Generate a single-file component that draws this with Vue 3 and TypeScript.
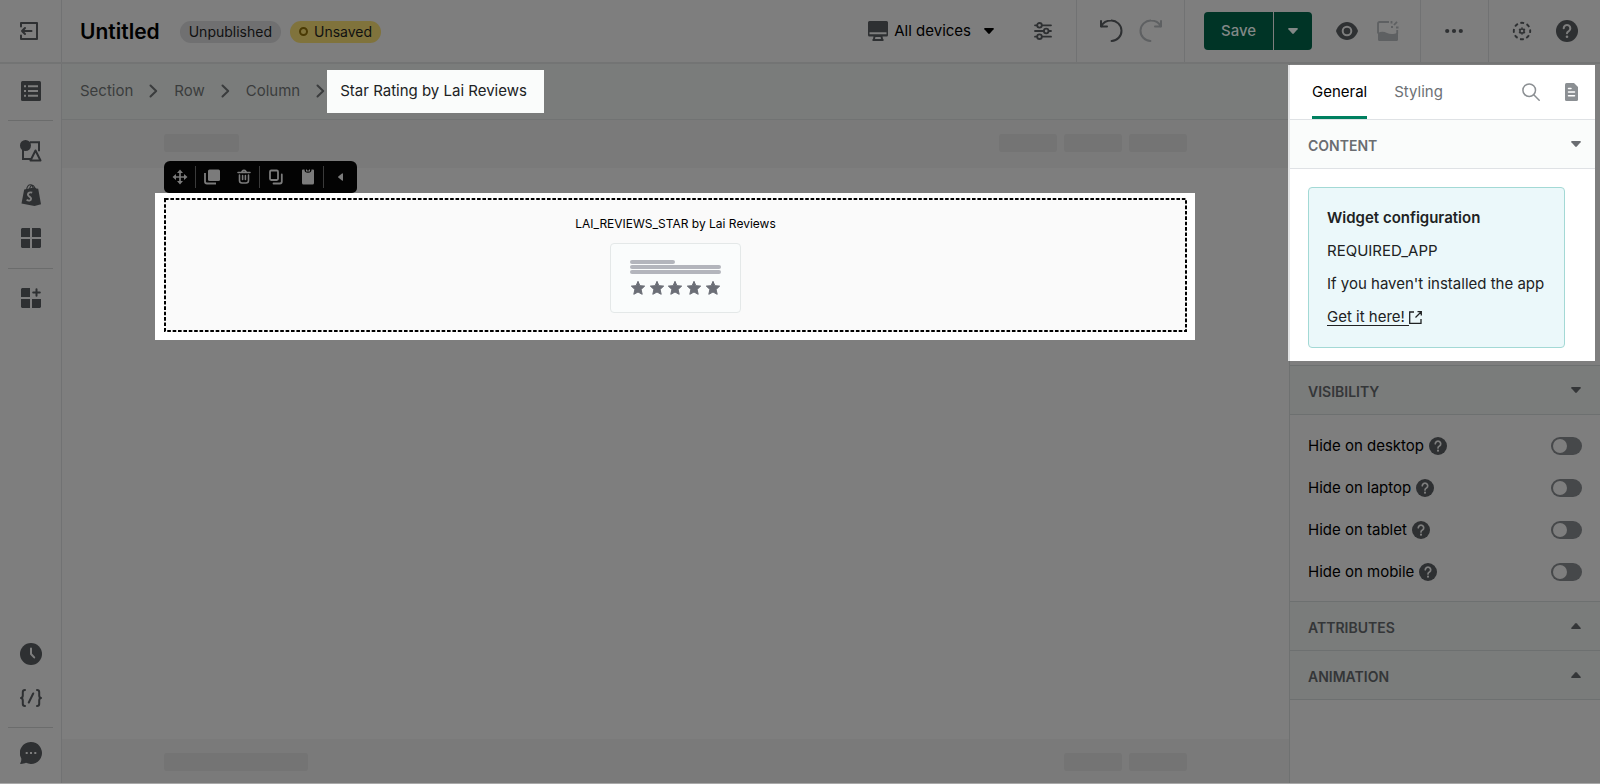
<script setup lang="ts">
import { ref } from 'vue'

interface VisibilityOption {
  id: string
  label: string
  hidden: boolean
}

const crumbs = ['Section', 'Row', 'Column']
const tabs = ['General', 'Styling']
const activeTab = ref('General')

const visibility = ref<VisibilityOption[]>([
  { id: 'hide-desktop', label: 'Hide on desktop', hidden: false },
  { id: 'hide-laptop', label: 'Hide on laptop', hidden: false },
  { id: 'hide-tablet', label: 'Hide on tablet', hidden: false },
  { id: 'hide-mobile', label: 'Hide on mobile', hidden: false },
])

const stars = [28, 47, 65, 84, 103]
</script>

<template>
  <div class="editor">
    <header class="topbar">
      <button class="icon-btn exit" aria-label="Exit">
        <svg width="20" height="20" viewBox="0 0 20 20" fill="none" stroke="currentColor" stroke-width="2" stroke-linecap="round" stroke-linejoin="round">
          <path d="M2 5.500V2h16v16H2v-3.500" />
          <path d="M12.500 10H3M6 7l-3 3 3 3" />
        </svg>
      </button>
      <div class="title-group">
        <h1>Untitled</h1>
        <span class="badge">Unpublished</span>
        <span class="badge warn"><i class="ring"></i>Unsaved</span>
      </div>
      <div class="devices">
        <button class="device-btn">
          <svg width="20" height="20" viewBox="0 0 20 20" fill="currentColor">
            <path d="M1.500 0h17A1.500 1.500 0 0 1 20 1.500V14a1.500 1.500 0 0 1-1.500 1.500h-4l.5 2.500h.5v2h-11v-2H5l.5-2.500h-4A1.500 1.500 0 0 1 0 14V1.500A1.500 1.500 0 0 1 1.500 0z" />
            <path class="knock" d="M1.500 11.200h17v2h-17zM7.400 16h5.200l.4 2h-6z" />
          </svg>
          <span>All devices</span>
          <svg class="caret" width="10" height="6" viewBox="0 0 10 6"><path d="M.8 0h8.400q1 .2.400 1.200L5.800 5.500q-.8.800-1.600 0L.4 1.200Q-.2.200.8 0z" fill="#000" /></svg>
        </button>
        <button class="icon-btn" aria-label="Settings">
          <svg width="18" height="18" viewBox="0 0 18 18" fill="none" stroke="currentColor" stroke-width="1.800" stroke-linecap="round">
            <path d="M1 3.300h1.800M8.200 3.300H17M1 9h8.500M15 9h2M1 14.700h1.800M8.200 14.700H17" />
            <circle cx="5.500" cy="3.300" r="2.300" /><circle cx="12.200" cy="9" r="2.300" /><circle cx="5.500" cy="14.700" r="2.300" />
          </svg>
        </button>
      </div>
      <div class="group history">
        <button class="icon-btn" aria-label="Undo">
          <svg width="24" height="24" viewBox="0 0 24 24" fill="none" stroke="currentColor" stroke-width="2" stroke-linecap="round" stroke-linejoin="round">
            <path d="M2 2v5.500h6" /><path d="M2.400 7.200C4 4 8 1.600 12 1.600a10.200 10.200 0 0 1 .6 20.400" />
          </svg>
        </button>
        <button class="icon-btn faded" aria-label="Redo">
          <svg width="24" height="24" viewBox="0 0 24 24" fill="none" stroke="currentColor" stroke-width="2" stroke-linecap="round" stroke-linejoin="round">
            <path d="M22 2v5.500h-6" /><path d="M21.600 7.200C20 4 16 1.600 12 1.600a10.200 10.200 0 0 0-.6 20.400" />
          </svg>
        </button>
      </div>
      <div class="group publish">
        <div class="save">
          <button class="save-main">Save</button>
          <button class="save-more" aria-label="More save options">
            <svg width="10" height="6" viewBox="0 0 10 6" fill="currentColor"><path d="M.8 0h8.400q1 .2.400 1.200L5.800 5.500q-.8.800-1.600 0L.4 1.200Q-.2.200.8 0z" /></svg>
          </button>
        </div>
        <button class="icon-btn" aria-label="Preview">
          <svg width="22" height="22" viewBox="0 0 22 22" fill="none">
            <path d="M0 11c1.500-5 5.800-9 11-9s9.500 4 11 9c-1.500 5-5.800 9-11 9S1.500 16 0 11z" fill="currentColor" />
            <circle cx="11" cy="11" r="4.300" stroke="#7e7e7e" stroke-width="2" />
          </svg>
        </button>
        <button class="icon-btn faded" aria-label="Generate image">
          <svg width="22" height="22" viewBox="0 0 22 22" fill="none" stroke="currentColor" stroke-width="1.800">
            <path d="M12 2H2.500A1.500 1.500 0 0 0 1 3.500v10M20.200 10v4" />
            <path d="M1 13c3-2 6-1.600 9 0s7 1.400 11-.5v7a1.500 1.500 0 0 1-1.500 1.500h-17A1.500 1.500 0 0 1 1 19.500z" fill="currentColor" stroke="none" />
            <path d="M14.500 1v2.500M21.500 7.500H19M17 5l3-3.200M14 7h2" />
          </svg>
        </button>
      </div>
      <div class="group more">
        <button class="icon-btn" aria-label="More actions">
          <svg width="18" height="6" viewBox="0 0 18 6" fill="currentColor"><circle cx="2.200" cy="3" r="2.100" /><circle cx="9" cy="3" r="2.100" /><circle cx="15.800" cy="3" r="2.100" /></svg>
        </button>
      </div>
      <div class="group support">
        <button class="icon-btn" aria-label="Preferences">
          <svg width="20" height="20" viewBox="0 0 20 20" fill="none" stroke="currentColor">
            <circle cx="10" cy="10" r="8.200" stroke-width="1.900" stroke-dasharray="3.800 2.640" stroke-dashoffset="1.900" />
            <circle cx="10" cy="10" r="2.100" stroke-width="1.500" />
            <path d="M10 6.500v1M10 12.500v1M7 8.200l.9.500M12.100 11.300l.9.500M13 8.200l-.9.500M7.900 11.300l-.9.500" stroke-width="1.700" />
          </svg>
        </button>
        <button class="icon-btn" aria-label="Help">
          <svg width="22" height="22" viewBox="0 0 20 20" fill="none">
            <circle cx="10" cy="10" r="10" fill="currentColor" />
            <path d="M7 7.500a3 3 0 1 1 4.600 2.600c-1 .6-1.600 1-1.600 2" stroke="#7e7e7e" stroke-width="1.900" stroke-linecap="round" />
            <circle cx="10" cy="15.200" r="1.200" fill="#7e7e7e" />
          </svg>
        </button>
      </div>
    </header>

    <div class="body">
      <nav class="rail" aria-label="Tools">
        <div class="rail-group first">
          <button class="icon-btn" aria-label="Outline">
            <svg width="20" height="20" viewBox="0 0 20 20" fill="currentColor">
              <rect width="20" height="20" rx="1.500" />
              <path class="knock" d="M3 4.200h2v2H3zM7 4.200h10v2H7zM3 9h2v2H3zM7 9h10v2H7zM3 13.800h2v2H3zM7 13.800h10v2H7z" />
            </svg>
          </button>
        </div>
        <div class="rail-group">
          <button class="icon-btn" aria-label="Elements">
            <svg width="22" height="22" viewBox="0 0 22 22" fill="none" stroke="currentColor" stroke-width="2">
              <path d="M3 9v10h8M10 2.200h9v9" />
              <circle cx="5.500" cy="5.500" r="5.500" fill="currentColor" stroke="none" />
              <path d="M15.500 10.500l5 10h-10z" stroke-linejoin="round" />
            </svg>
          </button>
          <button class="icon-btn" aria-label="Shopify">
            <svg width="20" height="22" viewBox="0 0 20 22" fill="none">
              <path d="M3.200 5.500L14 3.200l1.200 1.300 2 .3L20 20.200 13.500 22 .5 19.500z" fill="currentColor" />
              <path d="M5.500 6C6 2.500 8 .8 9.500.8S12 2.500 12 5M8.500 5.500C9 2.500 10.500 1 11.500 1.200S13.500 3 13.700 4.500" stroke="currentColor" stroke-width="1.100" />
              <path d="M11.200 8.700C9 7.800 6.900 8.700 6.900 10.500c0 2.300 3.200 2 3.200 4.300 0 2-2.400 2.400-4.500 1" stroke="#7e7e7e" stroke-width="1.900" />
            </svg>
          </button>
          <button class="icon-btn" aria-label="Templates">
            <svg width="20" height="20" viewBox="0 0 20 20" fill="currentColor">
              <path d="M1 0h8v9H0V1zM11 0h8l1 1v8h-9zM0 11h9v9H1l-1-1zM11 11h9v8l-1 1h-8z" />
            </svg>
          </button>
        </div>
        <div class="rail-group last">
          <button class="icon-btn" aria-label="Add widgets">
            <svg width="20" height="20" viewBox="0 0 20 20" fill="currentColor">
              <path d="M1 0h8v9H0V1zM0 11h9v9H1l-1-1zM11 11h9v8l-1 1h-8z" />
              <path d="M15.500 1.200v6.600M12.200 4.500h6.600" stroke="currentColor" stroke-width="2" stroke-linecap="round" />
            </svg>
          </button>
        </div>
        <div class="rail-group bottom">
          <button class="icon-btn" aria-label="History">
            <svg width="22" height="22" viewBox="0 0 22 22" fill="none">
              <circle cx="11" cy="11" r="11" fill="currentColor" />
              <path d="M11 5.500V11l3.200 3.400" stroke="#7e7e7e" stroke-width="2" stroke-linecap="round" stroke-linejoin="round" />
            </svg>
          </button>
          <button class="icon-btn" aria-label="Custom code">
            <svg width="22" height="18" viewBox="0 0 22 18" fill="none" stroke="currentColor" stroke-width="2" stroke-linecap="round" stroke-linejoin="round">
              <path d="M5 1C3.200 1 2.800 1.800 2.800 3v3.500C2.800 8 2.200 8.800 1 9c1.200.2 1.800 1 1.800 2.500V15c0 1.200.4 2 2.200 2M17 1c1.800 0 2.200.8 2.200 2v3.500c0 1.500.6 2.300 1.800 2.500-1.200.2-1.800 1-1.800 2.500V15c0 1.200-.4 2-2.200 2M13.200 4.500l-4.400 9" />
            </svg>
          </button>
        </div>
        <div class="rail-group chat">
          <button class="icon-btn" aria-label="Chat">
            <svg width="22" height="22" viewBox="0 0 22 22" fill="currentColor">
              <path d="M11 0a11 11 0 1 1-5 20.800C4.500 21.500 3 22 .8 22c-.8 0-.8-.6-.4-1.200.7-1 1-2.300.9-4.300A11 11 0 0 1 11 0z" />
              <path class="knock" d="M5.700 10h2v2h-2zM10 10h2v2h-2zM14.300 10h2v2h-2z" />
            </svg>
          </button>
        </div>
      </nav>

      <main class="stage">
        <nav class="crumbs" aria-label="Breadcrumb">
          <template v-for="crumb in crumbs" :key="crumb">
            <a href="#">{{ crumb }}</a>
            <svg width="9" height="14" viewBox="0 0 9 14" fill="none" stroke="currentColor" stroke-width="2" stroke-linecap="round" stroke-linejoin="round"><path d="M1.500 1.500L7.200 7l-5.700 5.500" /></svg>
          </template>
          <a href="#" class="current" aria-current="page">Star Rating by Lai Reviews</a>
        </nav>

        <div class="skeleton-band">
          <span class="bone short"></span>
          <span class="bones"><span class="bone"></span><span class="bone"></span><span class="bone"></span></span>
        </div>

        <section class="spotlight">
          <div class="tools" role="toolbar" aria-label="Widget actions">
            <button aria-label="Move" class="split">
              <svg width="16" height="16" viewBox="0 0 16 16" fill="currentColor">
                <path d="M8 3v10M3 8h10" stroke="currentColor" stroke-width="1.700" />
                <path d="M8 .5L11 4H5zM8 15.500L11 12H5zM.5 8L4 5v6zM15.500 8L12 5v6z" />
              </svg>
            </button>
            <button aria-label="Duplicate">
              <svg width="16" height="16" viewBox="0 0 16 16" fill="currentColor">
                <rect x="4" y="0.500" width="12" height="11.500" rx="1.500" />
                <path d="M1 4v8.500A2 2 0 0 0 3 14.500h9" fill="none" stroke="currentColor" stroke-width="1.800" />
              </svg>
            </button>
            <button aria-label="Delete" class="split">
              <svg width="14" height="16" viewBox="0 0 14 16" fill="none" stroke="currentColor" stroke-width="1.600" stroke-linecap="round">
                <path d="M1 3.500h12M5 2.500Q7 .2 9 2.500" />
                <path d="M2.500 6v5.500q0 2.500 2.500 2.500h4q2.500 0 2.500-2.500V6M5.600 6.500v4M8.400 6.500v4" />
              </svg>
            </button>
            <button aria-label="Copy">
              <svg width="16" height="16" viewBox="0 0 16 16" fill="none" stroke="currentColor" stroke-width="1.800" stroke-linejoin="round">
                <rect x="2" y="1.500" width="8" height="9.500" rx="1.200" />
                <path d="M13.800 5.500v7q0 2-2 2H5.500" stroke-linecap="round" />
              </svg>
            </button>
            <button aria-label="Paste" class="split">
              <svg width="12" height="16" viewBox="0 0 12 16" fill="currentColor">
                <path d="M1 .5h1.500C2.500 3 3.500 3.700 6 3.700S9.500 3 9.500.5H11q1 0 1 1V14q0 1.500-1.500 1.500h-9Q0 15.500 0 14V1.500q0-1 1-1z" />
                <path d="M4 .5h1v1h2v-1h1v2H4z" />
              </svg>
            </button>
            <button aria-label="Collapse">
              <svg width="5" height="8" viewBox="0 0 5 8" fill="currentColor"><path d="M5 .8v6.400q-.2.800-1 .4L.3 4.600q-.5-.6 0-1.200L4 .4q.8-.4 1 .4z" /></svg>
            </button>
          </div>
          <div class="widget">
            <svg class="dashes" aria-hidden="true"><rect /></svg>
            <p>LAI_REVIEWS_STAR by Lai Reviews</p>
            <svg class="preview" width="131" height="70" viewBox="0 0 131 70" aria-label="Star rating preview">
              <g fill="#b3b5bc">
                <rect x="20" y="17" width="45" height="4" rx="2" />
                <rect x="20" y="22" width="91" height="4" rx="2" />
                <rect x="20" y="27" width="91" height="4" rx="2" />
              </g>
              <path v-for="x in stars" :key="x" :transform="`translate(${x} 45)`" fill="#6b6e76" stroke="#6b6e76" stroke-linejoin="round" d="M0-6.700L1.900-2.300 6.700-1.900 3.100 1.400 4.200 6.300 0 4-4.200 6.300-3.100 1.400-6.700-1.900-1.900-2.300z" />
            </svg>
          </div>
        </section>

        <div class="blank"></div>

        <div class="skeleton-band footer">
          <span class="bone long"></span>
          <span class="bones"><span class="bone"></span><span class="bone"></span></span>
        </div>
      </main>

      <aside class="panel">
        <div class="lit">
          <div class="tabs">
            <button v-for="tab in tabs" :key="tab" class="tab" :class="{ active: tab === activeTab }" @click="activeTab = tab">{{ tab }}</button>
            <span class="tab-tools">
              <button class="icon-btn" aria-label="Search">
                <svg width="18" height="18" viewBox="0 0 18 18" fill="none" stroke="#8b8f93" stroke-width="1.500" stroke-linecap="round"><circle cx="7.200" cy="7.200" r="6.300" /><path d="M12 12l5.200 5.200" /></svg>
              </button>
              <button class="icon-btn" aria-label="Documentation">
                <svg width="13" height="18" viewBox="0 0 13 18" fill="#8b8f93"><path d="M1.500 0H9l4 4v12.500q0 1.500-1.500 1.500h-10Q0 18 0 16.500v-15Q0 0 1.500 0z" /><path d="M3.500 5.500H6M3.500 9h6M3.500 12.700h6" stroke="#fff" stroke-width="1.500" stroke-linecap="round" /></svg>
              </button>
            </span>
          </div>
          <h2 class="section-head">
            <button aria-expanded="true">CONTENT<svg width="10" height="6" viewBox="0 0 10 6" fill="currentColor"><path d="M.8 0h8.400q1 .2.400 1.200L5.800 5.500q-.8.800-1.600 0L.4 1.200Q-.2.200.8 0z" /></svg></button>
          </h2>
          <div class="callout">
            <strong>Widget configuration</strong>
            <span>REQUIRED_APP</span>
            <span>If you haven't installed the app</span>
            <a href="#"><span class="underlined">Get it here!</span><svg width="13" height="13" viewBox="0 0 13 13" fill="none" stroke="currentColor" stroke-width="1.300"><path d="M5 1H.7v11.300H12V8M8.500.7H12.300V4.500M12 1L6.500 6.500" /></svg></a>
          </div>
        </div>

        <h2 class="section-head dim">
          <button aria-expanded="true">VISIBILITY<svg width="10" height="6" viewBox="0 0 10 6" fill="currentColor"><path d="M.8 0h8.400q1 .2.400 1.200L5.800 5.500q-.8.800-1.600 0L.4 1.200Q-.2.200.8 0z" /></svg></button>
        </h2>
        <div class="options">
          <div v-for="option in visibility" :key="option.id" class="option">
            <label :for="option.id">{{ option.label }}</label>
            <svg class="hint" width="18" height="18" viewBox="0 0 20 20" fill="none" aria-hidden="true">
              <circle cx="10" cy="10" r="10" fill="#2e3032" />
              <path d="M7 7.500a3 3 0 1 1 4.600 2.600c-1 .6-1.600 1-1.600 2" stroke="#7e7e7e" stroke-width="1.900" stroke-linecap="round" />
              <circle cx="10" cy="15.200" r="1.200" fill="#7e7e7e" />
            </svg>
            <input :id="option.id" v-model="option.hidden" type="checkbox" role="switch" class="switch" />
          </div>
        </div>
        <h2 v-for="name in ['ATTRIBUTES', 'ANIMATION']" :key="name" class="section-head dim closed">
          <button aria-expanded="false">{{ name }}<svg width="10" height="6" viewBox="0 0 10 6" fill="currentColor"><path d="M.8 6h8.400q1-.2.400-1.200L5.800.5q-.8-.8-1.600 0L.4 4.800Q-.2 5.800.8 6z" /></svg></button>
        </h2>
      </aside>
    </div>
  </div>
</template>

<style>
body {
  margin: 0;
  background: #7e7e7e;
}
</style>

<style scoped>
.editor {
  box-sizing: border-box;
  display: flex;
  flex-direction: column;
  min-height: 100vh;
  background: #7e7e7e;
  border-bottom: 1px solid #a9a9a9;
  color: #000;
  font-family: Inter, "Liberation Sans", sans-serif;
  font-size: 15px;
  line-height: 20px;
}

button {
  margin: 0;
  padding: 0;
  border: 0;
  background: none;
  color: inherit;
  font: inherit;
  cursor: pointer;
}

a {
  color: inherit;
  text-decoration: none;
}

svg {
  display: block;
  flex: none;
}

.knock {
  fill: #7e7e7e;
}

.icon-btn {
  display: flex;
  align-items: center;
  justify-content: center;
  color: #2e3032;
}

.icon-btn.faded {
  color: #5e6062;
}

/* Top bar */
.topbar {
  box-sizing: border-box;
  display: flex;
  align-items: stretch;
  height: 64px;
  border-bottom: 2px solid #737474;
}

.exit {
  width: 62px;
  border-right: 1px solid #717273;
  padding-right: 3px;
}

.title-group {
  display: flex;
  align-items: center;
  padding: 1px 0 0 18px;
  white-space: nowrap;
}

h1 {
  margin: 0 20px 0 0;
  font-size: 21px;
  font-weight: 600;
  line-height: 28px;
}

.badge {
  display: flex;
  align-items: center;
  height: 22px;
  margin-right: 9px;
  padding: 0 9px;
  border-radius: 11px;
  background: #707071;
  color: #101111;
  font-size: 14px;
}

.badge.warn {
  background: #80733c;
}

.ring {
  box-sizing: border-box;
  width: 9px;
  height: 9px;
  margin-right: 6px;
  border: 2px solid #4a3a04;
  border-radius: 50%;
}

.devices {
  display: flex;
  align-items: center;
  gap: 40px;
  margin-left: auto;
  padding-right: 24px;
}

.device-btn {
  display: flex;
  align-items: center;
  gap: 6px;
  color: #2e3032;
  white-space: nowrap;
}

.device-btn span {
  color: #000;
}

.device-btn .caret {
  margin-left: 7px;
}

.group {
  box-sizing: border-box;
  display: flex;
  align-items: center;
  border-left: 1px solid #717273;
}

.history {
  gap: 16px;
  width: 108px;
  padding-left: 22px;
}

.publish {
  width: 236px;
  padding-left: 19px;
  gap: 19px;
}

.more {
  justify-content: center;
  width: 68px;
  padding-right: 2px;
}

.support {
  gap: 24px;
  width: 112px;
  padding-left: 23px;
}

.save {
  display: flex;
  gap: 1px;
  margin-right: 5px;
}

.save button {
  display: flex;
  align-items: center;
  justify-content: center;
  height: 38px;
  background: #003426;
  color: #828887;
}

.save .save-main {
  width: 69px;
  border-radius: 4px 0 0 4px;
  font-weight: 500;
}

.save .save-more {
  width: 38px;
  border-radius: 0 4px 4px 0;
}

/* Body */
.body {
  display: grid;
  flex: 1;
  grid-template-columns: 62px minmax(0, 1fr) 311px;
}

.rail {
  display: flex;
  flex-direction: column;
  padding: 0 8px;
  border-right: 1px solid #717273;
}

.rail-group {
  display: flex;
  flex-direction: column;
  align-items: center;
  gap: 22px;
  padding: 19px 0 20px;
  border-bottom: 1px solid #6b6c6c;
}

.rail-group.first {
  padding: 17px 0 19px;
}

.rail-group.last,
.rail-group.chat {
  border-bottom: 0;
}

.rail-group.bottom {
  gap: 24px;
  margin-top: auto;
}

.rail-group.chat {
  padding: 14px 0 19px;
}

.stage {
  display: flex;
  flex-direction: column;
}

.crumbs {
  box-sizing: border-box;
  display: flex;
  align-items: center;
  gap: 16px;
  height: 56px;
  padding: 0 18px 1px;
  border-bottom: 1px solid #717373;
  background: #7a7c7b;
  color: #3a3c3d;
  white-space: nowrap;
}

.crumbs .current {
  display: flex;
  align-items: center;
  height: 43px;
  margin-left: -14px;
  padding: 0 17px 0 13px;
  background: #fafcfb;
  color: #202223;
}

.skeleton-band {
  box-sizing: border-box;
  display: flex;
  justify-content: space-between;
  height: 48px;
  padding: 14px 102px 0 102px;
  background: #7a7a7a;
}

.skeleton-band.footer {
  height: 44px;
}

.bones {
  display: flex;
  gap: 7px;
}

.bone {
  width: 58px;
  height: 18px;
  border-radius: 3px;
  background: #747474;
}

.bone.short {
  width: 75px;
}

.bone.long {
  width: 144px;
}

.spotlight {
  position: relative;
  margin: 25px 94px 0 93px;
  padding: 5px 8px 8px 9px;
  background: #fff;
}

.tools {
  position: absolute;
  bottom: 100%;
  left: 9px;
  display: flex;
  padding-right: 1px;
  border-radius: 6px 6px 5px 5px;
  background: #030303;
  color: #7b7b7b;
}

.tools button {
  display: flex;
  align-items: center;
  justify-content: center;
  width: 32px;
  height: 32px;
}

.tools .split {
  background: linear-gradient(#3a3a3a, #3a3a3a) right center / 1px 22px no-repeat;
}

.widget {
  position: relative;
  display: flex;
  flex-direction: column;
  align-items: center;
  gap: 9px;
  padding: 16px 0 19px;
  background: #fafafa;
}

.dashes {
  position: absolute;
  inset: 0;
  width: 100%;
  height: 100%;
}

.dashes rect {
  x: 1px;
  y: 1px;
  width: calc(100% - 2px);
  height: calc(100% - 2px);
  fill: none;
  stroke: #000;
  stroke-width: 2px;
  stroke-dasharray: 3.600 1.780;
}

.widget p {
  margin: 0;
  font-size: 12px;
}

.preview {
  border-radius: 4px;
  outline: 1px solid #e4e8e8;
  outline-offset: -1px;
  background: #fafcfc;
}

.blank {
  flex: 1;
}

/* Settings panel */
.panel {
  border-left: 1px solid #6f7171;
  padding-top: 1px;
}

.lit {
  margin: 0 5px 4px -2px;
  padding-bottom: 13px;
  border-left: 2px solid #e3e4e5;
  background: #fff;
}

.tabs {
  display: flex;
  height: 54px;
  padding: 0 17px 0 22px;
  gap: 27px;
}

.tab {
  color: #6d7175;
  padding-top: 2px;
  border-bottom: 3px solid transparent;
}

.tab.active {
  border-bottom-color: #008060;
  color: #000;
}

.tab-tools {
  display: flex;
  align-items: center;
  gap: 25px;
  margin-left: auto;
}

.section-head {
  margin: 0;
  border: solid #dfe2e5;
  border-width: 1px 0;
  background: #fafcfb;
  color: #6a6d71;
  font-size: 14px;
  font-weight: 600;
}

.section-head button {
  display: flex;
  align-items: center;
  justify-content: space-between;
  width: 100%;
  height: 48px;
  padding: 3px 14px 0 18px;
}

.section-head button svg {
  margin-bottom: 4px;
}

.section-head.dim {
  border-color: #6d7070;
  background: #7a7c7b;
  color: #343638;
}

.section-head.dim button {
  padding-right: 19px;
}

.section-head.closed + .closed {
  border-top: 0;
}

.callout {
  display: flex;
  flex-direction: column;
  gap: 13px;
  margin: 18px 30px 0 18px;
  padding: 20px 0 20px 18px;
  border: 1px solid #a3d9d5;
  border-radius: 4px;
  background: #ebf8fa;
  color: #202223;
  white-space: nowrap;
}

.callout strong {
  font-weight: 600;
}

.callout a {
  display: flex;
  align-items: center;
  height: 20px;
}

.callout .underlined {
  padding-right: 4px;
  border-bottom: 1px solid #202223;
  line-height: 16px;
}

.options {
  padding: 10px 18px 8px;
}

.option {
  display: flex;
  align-items: center;
  height: 42px;
}

.hint {
  margin-left: 5px;
}

.switch {
  appearance: none;
  display: flex;
  width: 31px;
  height: 18px;
  margin: 0 0 0 auto;
  padding: 2px;
  border-radius: 9px;
  background: #46484a;
  box-sizing: border-box;
  cursor: pointer;
}

.switch::before {
  content: "";
  width: 14px;
  height: 14px;
  border-radius: 50%;
  background: #7e7e7e;
}

.switch:checked {
  justify-content: flex-end;
  background: #004030;
}
</style>
